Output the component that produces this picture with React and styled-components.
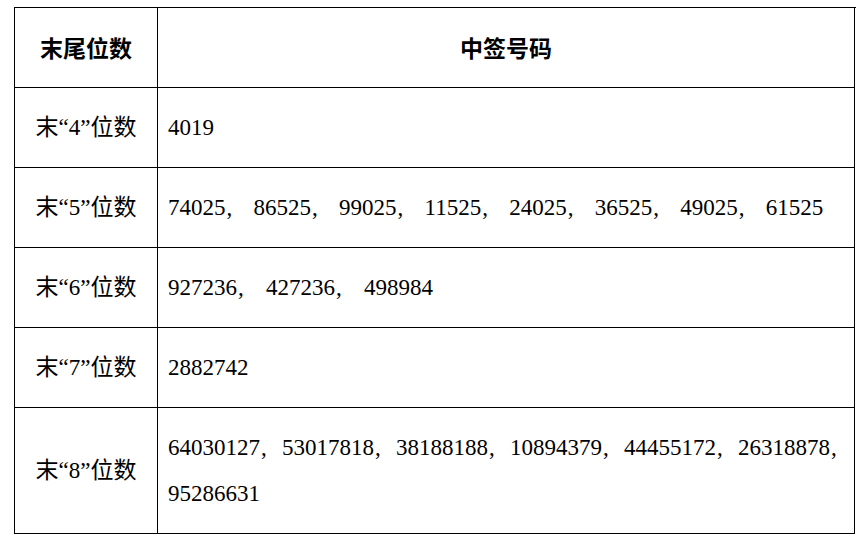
import React from "react";
import styled, { createGlobalStyle } from "styled-components";

const GlobalStyle = createGlobalStyle`
  html, body {
    margin: 0;
    padding: 0;
    background: #ffffff;
  }
  body {
    font-family: "Liberation Serif", "Noto Sans CJK SC", serif;
    color: #000;
  }
`;

const Table = styled.div`
  display: grid;
  grid-template-columns: 143px 697px;
  width: 841px;
  margin: 7px 0 0 14px;
  border-top: 1px solid #000;
  border-left: 1px solid #000;
`;

const Cell = styled.div`
  box-sizing: border-box;
  height: ${(p) => p.$h}px;
  border-right: 1px solid #000;
  border-bottom: 1px solid #000;
  display: flex;
  flex-direction: column;
  justify-content: center;
  align-items: ${(p) => (p.$center ? "center" : "flex-start")};
  padding-left: ${(p) => (p.$center ? 0 : 10)}px;
  font-size: 23px;
  white-space: nowrap;
`;

const HeadText = styled.span`
  font-family: "Noto Sans CJK SC", sans-serif;
  font-weight: 700;
  font-size: 23px;
  line-height: 1;
`;

const Label = styled.span`
  font-family: "Liberation Serif", "Noto Sans CJK SC", serif;
  font-size: 23px;
  line-height: 46px;
`;

const Line = styled.span`
  display: block;
  line-height: 46px;
`;

// comma with a fixed advance, like the full-width commas of the source
const Sep = styled.span`
  display: inline-block;
  width: ${(p) => p.$w}px;
  padding-left: 1px;
  box-sizing: border-box;
`;

const rows = [
  { label: "末“4”位数", lines: [["4019"]], sep: 28 },
  {
    label: "末“5”位数",
    lines: [["74025", "86525", "99025", "11525", "24025", "36525", "49025", "61525"]],
    sep: 28,
  },
  { label: "末“6”位数", lines: [["927236", "427236", "498984"]], sep: 29 },
  { label: "末“7”位数", lines: [["2882742"]], sep: 28 },
  {
    label: "末“8”位数",
    lines: [
      ["64030127", "53017818", "38188188", "10894379", "44455172", "26318878", ""],
      ["95286631"],
    ],
    sep: 22,
  },
];

export default function App() {
  return (
    <>
      <GlobalStyle />
      <Table>
        <Cell $h={80} $center>
          <HeadText>末尾位数</HeadText>
        </Cell>
        <Cell $h={80} $center>
          <HeadText>中签号码</HeadText>
        </Cell>
        {rows.map((r) => {
          const h = r.lines.length > 1 ? 126 : 80;
          return (
            <React.Fragment key={r.label}>
              <Cell $h={h} $center>
                <Label>{r.label}</Label>
              </Cell>
              <Cell $h={h}>
                {r.lines.map((nums, i) => (
                  <Line key={i}>
                    {nums.map((n, j) => (
                      <React.Fragment key={j}>
                        {j > 0 && <Sep $w={r.sep}>,</Sep>}
                        {n}
                      </React.Fragment>
                    ))}
                  </Line>
                ))}
              </Cell>
            </React.Fragment>
          );
        })}
      </Table>
    </>
  );
}
